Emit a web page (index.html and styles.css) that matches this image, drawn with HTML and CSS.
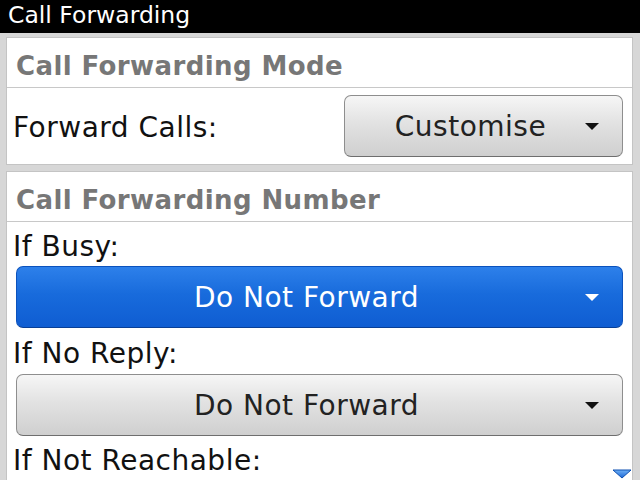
FILE: index.html
```html
<!DOCTYPE html>
<html>
<head>
<meta charset="utf-8">
<link rel="stylesheet" href="styles.css">
</head>
<body>
<div class="titlebar">Call Forwarding</div>
<div class="screen">
  <section class="panel">
    <div class="panel-head">Call Forwarding Mode</div>
    <div class="row">
      <span class="label">Forward Calls:</span>
      <div class="choice choice-small">
        <span class="choice-text">Customise</span>
        <svg class="arrow" width="16" height="9" viewBox="0 0 16 9"><path d="M1 1 H15 L8 8 Z" fill="#111"/></svg>
      </div>
    </div>
  </section>
  <section class="panel panel-last">
    <div class="panel-head">Call Forwarding Number</div>
    <div class="field-label">If Busy:</div>
    <div class="choice choice-wide choice-focus">
      <span class="choice-text">Do Not Forward</span>
      <svg class="arrow" width="16" height="9" viewBox="0 0 16 9"><path d="M1 1 H15 L8 8 Z" fill="#fff"/></svg>
    </div>
    <div class="field-label gap">If No Reply:</div>
    <div class="choice choice-wide">
      <span class="choice-text">Do Not Forward</span>
      <svg class="arrow" width="16" height="9" viewBox="0 0 16 9"><path d="M1 1 H15 L8 8 Z" fill="#111"/></svg>
    </div>
    <div class="field-label">If Not Reachable:</div>
  </section>
  <svg class="more" width="20" height="10" viewBox="0 0 20 10"><defs><linearGradient id="mg" x1="0" y1="0" x2="0" y2="1"><stop offset="0" stop-color="#6fb0f5"/><stop offset="1" stop-color="#1a66d6"/></linearGradient></defs><path d="M1 1 H19 L10 9 Z" fill="url(#mg)" stroke="#0d4fb0" stroke-width="1"/></svg>
</div>
</body>
</html>
```

FILE: styles.css
```css
html, body {
  margin: 0;
  padding: 0;
}
body {
  width: 640px;
  height: 480px;
  overflow: hidden;
  background: #d7d7d7;
  font-family: "DejaVu Sans", "Liberation Sans", sans-serif;
}
.titlebar {
  height: 33px;
  background: #000;
  color: #fff;
  font-size: 23.5px;
  line-height: 31px;
  padding-left: 8px;
  box-sizing: border-box;
}
.screen {
  position: relative;
  height: 447px;
  padding: 4px 7px 0 6px;
  box-sizing: border-box;
  display: flex;
  flex-direction: column;
  gap: 6px;
}
.panel {
  background: #fff;
  border: 1px solid #c4c4c4;
}
.panel-last {
  flex: 1;
  overflow: hidden;
  border-bottom: none;
}
.panel-head {
  height: 50px;
  box-sizing: border-box;
  padding: 7px 0 0 9px;
  line-height: 43px;
  font-size: 26px;
  letter-spacing: 0.4px;
  font-weight: bold;
  color: #777;
  border-bottom: 1px solid #c8c8c8;
}
.row {
  display: flex;
  align-items: center;
  justify-content: space-between;
  padding: 7px 9px 7px 6px;
}
.label, .field-label {
  font-size: 28px;
  letter-spacing: 0.5px;
  color: #111;
}
.label {
  padding-top: 3px;
}
.field-label {
  line-height: 39px;
  padding: 5px 0 0 6px;
}
.field-label.gap {
  padding-top: 6px;
  padding-bottom: 1px;
}
.choice {
  height: 62px;
  box-sizing: border-box;
  border-radius: 7px;
  border: 1px solid #8e8e8e;
  border-bottom-color: #6e6e6e;
  background: linear-gradient(#f6f6f6, #e2e2e2 45%, #cfcfcf);
  display: flex;
  align-items: center;
  position: relative;
  font-size: 28px;
  letter-spacing: 0.5px;
  color: #222;
  padding: 0 36px 0 10px;
}
.choice-small {
  width: 279px;
}
.choice-wide {
  margin: 0 9px;
}
.choice-text {
  flex: 1;
  text-align: center;
}
.choice-focus {
  background: linear-gradient(#2d80ea, #186bdc 45%, #0f5dd2);
  border-color: #0b52bd;
  border-bottom-color: #083f96;
  color: #fff;
}
.arrow {
  position: absolute;
  right: 22px;
  top: 26px;
}
.more {
  position: absolute;
  right: 8px;
  bottom: 1px;
}
```
